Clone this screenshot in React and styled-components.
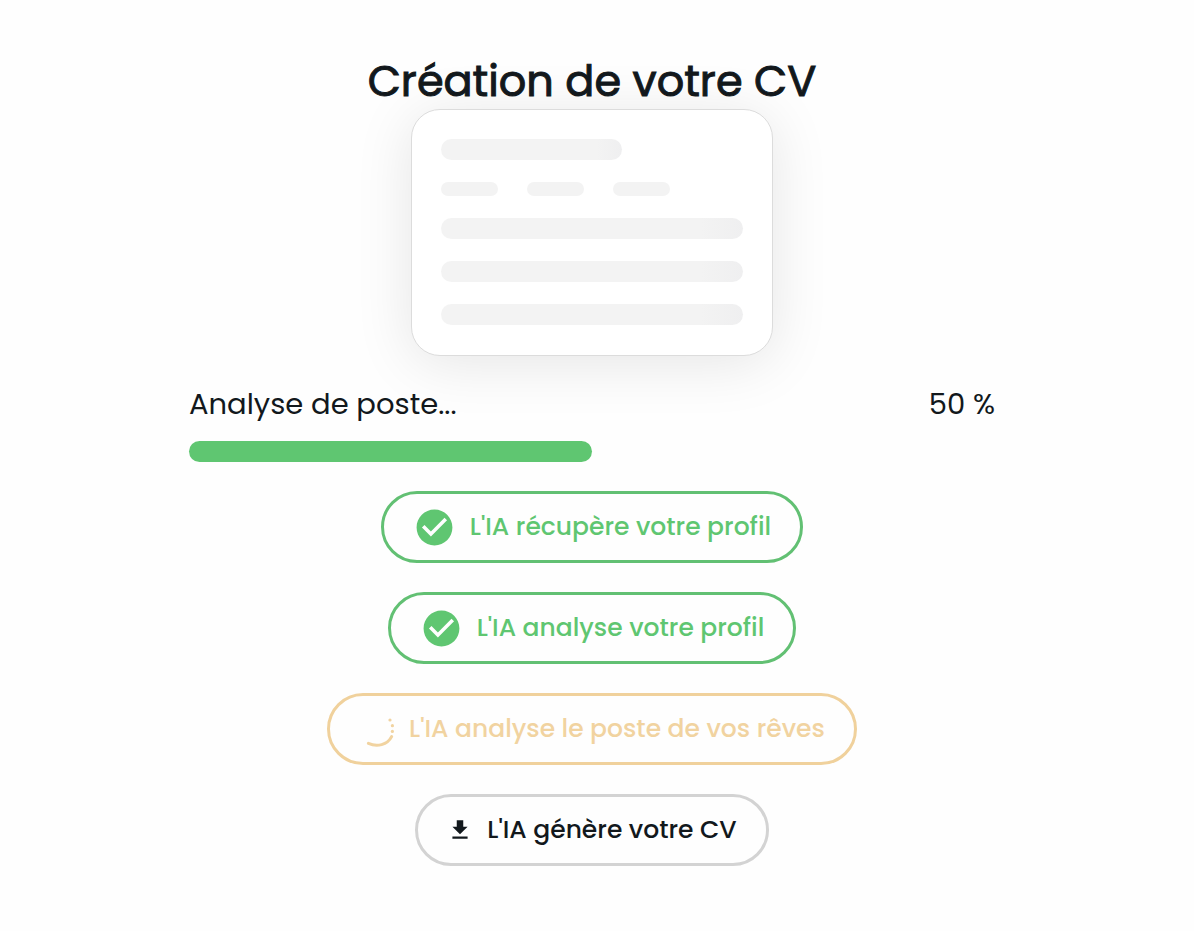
import styled, { createGlobalStyle } from 'styled-components';

const etapes = [
    { texte: "L'IA récupère votre profil", statut: 'fini' },
    { texte: "L'IA analyse votre profil", statut: 'fini' },
    { texte: "L'IA analyse le poste de vos rêves", statut: 'encours' },
    { texte: "L'IA génère votre CV", statut: 'attente' },
];

const couleurs = {
    fini: { texte: '#5fc671', bord: '#62c073' },
    encours: { texte: '#f1d3a0', bord: '#f0d19c' },
    attente: { texte: '#12181c', bord: '#d3d3d3' },
};

export default function App() {

    const progression = 50;

    return (
        <>
            <GlobalStyle />
            <Page>
                <Titre>Création de votre CV</Titre>

                <Apercu aria-hidden="true">
                    <Ligne $largeur="60%" />
                    <Etiquettes>
                        <Etiquette />
                        <Etiquette />
                        <Etiquette />
                    </Etiquettes>
                    <Ligne />
                    <Ligne />
                    <Ligne />
                </Apercu>

                <Suivi>
                    <Legende>
                        <label htmlFor="progression">Analyse de poste...</label>
                        <span>{progression} %</span>
                    </Legende>
                    <Barre id="progression" value={progression} max="100" />
                </Suivi>

                <Etapes>
                    {etapes.map((etape, index) => (
                        <Etape key={index} $couleur={couleurs[etape.statut]}>
                            <Icone statut={etape.statut} />
                            <span>{etape.texte}</span>
                        </Etape>
                    ))}
                </Etapes>
            </Page>
        </>
    )
}

function Icone({ statut }) {
    if (statut === 'fini') {
        return (
            <Svg $taille={43} viewBox="0 0 24 24" fill="currentColor" aria-hidden="true">
                <path d="M12 2C6.48 2 2 6.48 2 12s4.48 10 10 10 10-4.48 10-10S17.52 2 12 2zm-2 15l-5-5 1.41-1.41L10 14.17l7.59-7.59L19 8l-9 9z" />
            </Svg>
        )
    }

    if (statut === 'encours') {
        return (
            <Svg $taille={36} viewBox="0 0 36 36" fill="none" aria-hidden="true">
                <path d="M9.4 32.4C18 36.2 28.4 34 32.6 25.6" stroke="currentColor" strokeWidth="3" strokeLinecap="round" />
                <g fill="currentColor">
                    <circle cx="31" cy="9" r="1.6" />
                    <circle cx="33.4" cy="14.7" r="1.6" />
                    <circle cx="33.4" cy="20.4" r="1.6" />
                </g>
            </Svg>
        )
    }

    return (
        <Svg $taille={26} viewBox="0 0 24 24" fill="currentColor" aria-hidden="true">
            <path d="M19 9h-4V3H9v6H5l7 7 7-7zM5 18v2h14v-2H5z" />
        </Svg>
    )
}

const GlobalStyle = createGlobalStyle`
body{
    margin: 0;
    background-color: #fefefe;
    color: #12181c;
    font-family: Poppins, Inter, sans-serif;
}
`
const Page = styled.main`
display: flex;
flex-direction: column;
align-items: center;
padding: 53px 10px 58px 0;
`
const Titre = styled.h1`
margin: 0;
font-weight: 400;
font-size: 43px;
line-height: 56px;
text-align: center;
-webkit-text-stroke: 1px currentColor;
position: relative;
z-index: 1;
`
const Apercu = styled.div`
width: 90%;
max-width: 362px;
box-sizing: border-box;
padding: 29px 29px 30px;
display: flex;
flex-direction: column;
gap: 22px;
background-color: #ffffff;
border: 1px solid #dcdcdc;
border-radius: 29px;
box-shadow: 0 7px 58px rgba(0, 0, 0, 0.1);
`
const Ligne = styled.div`
width: ${({ $largeur }) => $largeur || '100%'};
height: 21px;
border-radius: 11px;
background: linear-gradient(90deg, #f3f3f3 86%, #efeff0 100%);
`
const Etiquettes = styled.div`
display: flex;
gap: 29px;
`
const Etiquette = styled.div`
width: 57px;
height: 14px;
border-radius: 7px;
background-color: #f3f3f3;
`
const Suivi = styled.section`
width: 90%;
max-width: 806px;
margin-top: 26px;
position: relative;
`
const Legende = styled.div`
display: flex;
justify-content: space-between;
font-size: 29px;
line-height: 44px;
`
const Barre = styled.progress`
display: block;
width: 100%;
height: 21px;
margin-top: 15px;
border: none;
appearance: none;
background: transparent;

&::-webkit-progress-bar{
    background: transparent;
}
&::-webkit-progress-value{
    background-color: #5fc671;
    border-radius: 11px;
}
`
const Etapes = styled.ol`
list-style: none;
margin: 29px 0 0;
padding: 0;
display: flex;
flex-direction: column;
align-items: center;
gap: 29px;
`
const Etape = styled.li`
display: flex;
align-items: center;
gap: 14px;
min-height: 72px;
box-sizing: border-box;
padding: 0 29px;
border: 3px solid ${({ $couleur }) => $couleur.bord};
border-radius: 36px;
color: ${({ $couleur }) => $couleur.texte};
font-weight: 500;
font-size: 25px;
line-height: 36px;
`
const Svg = styled.svg`
width: ${({ $taille }) => $taille}px;
height: ${({ $taille }) => $taille}px;
flex-shrink: 0;
`
